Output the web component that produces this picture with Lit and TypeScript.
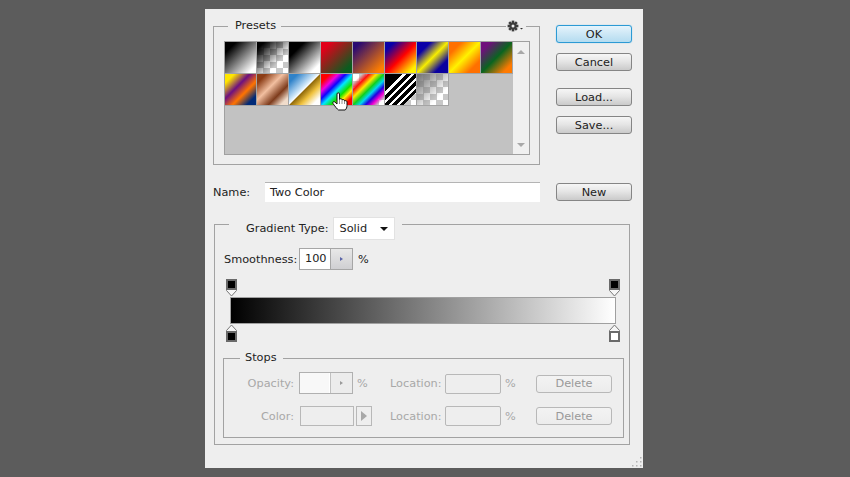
import { css, html, LitElement, svg } from "lit";
import { customElement } from "lit/decorators.js";

const CHECK = "conic-gradient(#c8c8c8 25%, #fff 0 50%, #c8c8c8 0 75%, #fff 0) 0 0 / 13px 13px";

const SWATCHES = [
  "linear-gradient(135deg, #000 18%, #fff 88%)",
  `linear-gradient(135deg, #000 12%, rgba(0,0,0,0) 68%), ${CHECK}`,
  "linear-gradient(135deg, #000 25%, #fff 85%)",
  "linear-gradient(135deg, #e2001a 15%, #0b5c1f 85%)",
  "linear-gradient(135deg, #2a0a72 12%, #ff7e00 88%)",
  "linear-gradient(135deg, #0a00a8 15%, #ff0000 52%, #fff200 88%)",
  "linear-gradient(135deg, #0a00a8 22%, #f7ee00 50%, #0a00a0 78%)",
  "linear-gradient(135deg, #ff7000 20%, #fff200 50%, #ff7000 80%)",
  "linear-gradient(135deg, #6f0f7c 15%, #0a6420 50%, #ff7a00 85%)",
  "linear-gradient(135deg, #ffe600 15%, #6d1080 40%, #ff7400 62%, #002a78 85%)",
  "linear-gradient(135deg, #8c3d16 15%, #f2bfa0 42%, #7d3b1c 68%, #f0dccb 88%)",
  "linear-gradient(135deg, #2f82c9 14%, #d2e9fb 44%, #fff 49.5%, #8c6508 50.5%, #f0c23e 68%, #fff 88%)",
  "linear-gradient(135deg, #ff0000 14%, #f000e0 28%, #1000ff 40%, #00e8ff 52%, #10e000 66%, #fff200 76%, #ff0000 88%)",
  `linear-gradient(135deg, transparent 14%, #ff1010 26%, #ffe800 38%, #10d020 50%, #00d8f0 60%, #2000e0 70%, #f000d0 80%, transparent 90%), ${CHECK}`,
  `linear-gradient(135deg, #000 0 29%, #fff 29% 35%, #000 35% 42%, #fff 42% 48%, #000 48% 55%, #fff 55% 61%, #000 61% 68%, #fff 68% 74%, #000 74% 80%, transparent 80%), ${CHECK}`,
  `linear-gradient(135deg, #777 5%, rgba(120,120,120,0) 72%), ${CHECK}`,
];

const stop = (fill: string, flip: boolean) => svg`
  <svg class="stop" width="11" height="18" viewBox="0 0 11 18">
    <g transform=${flip ? "translate(0 18) scale(1 -1)" : ""}>
      <path d="M.5 9.500v2l5 5.500 5-5.500v-2z" fill="#f6f6f6" stroke="#777" />
      <rect x="1" y="1" width="9" height="9" fill=${fill} stroke="#6a6a6a" stroke-width="2" />
    </g>
  </svg>
`;

@customElement("app-root")
export class AppRoot extends LitElement {
  private swatches() {
    return SWATCHES.map((bg) => html`<div class="swatch" style="background:${bg}"></div>`);
  }

  render() {
    return html`
      <div class="dialog">
        <div class="top">
          <div class="group presets">
            <div class="legend-row">
              <span class="legend">Presets</span>
              <span class="gear">
                <svg width="18" height="12" viewBox="0 0 18 12">
                  <g fill="#3c3c3c">
                    <circle cx="6" cy="6" r="3.6" />
                    <rect x="4.7" y="0.6" width="2.6" height="10.8" />
                    <rect x="0.6" y="4.7" width="10.8" height="2.6" />
                    <rect x="4.7" y="0.6" width="2.6" height="10.8" transform="rotate(45 6 6)" />
                    <rect x="4.7" y="0.6" width="2.6" height="10.8" transform="rotate(-45 6 6)" />
                  </g>
                  <circle cx="6" cy="6" r="1.5" fill="#eee" />
                  <path d="M13 8h3l-1.500 1.500z" fill="#333" />
                </svg>
              </span>
            </div>
            <div class="picker">
              <div class="swatches">${this.swatches()}</div>
              <div class="scrollbar">
                <span class="tri up"></span>
                <span class="tri down"></span>
              </div>
              <svg class="hand" width="17" height="19" viewBox="0 0 17 19">
                <path
                  d="M5 2c0-1.600 2.500-1.600 2.500 0v5.500c.4-1 2.300-1 2.500 0v.7c.5-.9 2.200-.8 2.500.2v.6c.6-.6 2.400-.5 2.500.8v3.700c0 2-.8 3.500-1.800 4.500H6.500C5 17 3.500 15 1 11.500c-.8-1.300.8-2.500 1.900-1.500L5 12z"
                  fill="#fff"
                  stroke="#111"
                  stroke-width="1"
                />
                <path d="M7.500 8v4M10 8.500v3.500M12.500 9v3" stroke="#777" stroke-width=".8" fill="none" />
              </svg>
            </div>
          </div>
          <div class="actions">
            <button class="btn default">OK</button>
            <button class="btn">Cancel</button>
            <button class="btn spaced">Load...</button>
            <button class="btn">Save...</button>
          </div>
        </div>

        <div class="name-row">
          <label class="name-label">Name:</label>
          <div class="field name-field">Two Color</div>
          <button class="btn">New</button>
        </div>

        <div class="group gradient">
          <div class="legend-row">
            <div class="legend type">
              <span>Gradient Type:</span>
              <div class="select">Solid<span class="caret"></span></div>
            </div>
          </div>

          <div class="smooth">
            <span class="smooth-label">Smoothness:</span>
            <div class="spin">
              <span class="spin-value">100</span>
              <span class="spin-btn"><i></i></span>
            </div>
            <span class="pct">%</span>
          </div>

          <div class="editor">
            <div class="stop-row">${stop("#000", false)}${stop("#000", false)}</div>
            <div class="bar"></div>
            <div class="stop-row">${stop("#000", true)}${stop("#fff", true)}</div>
          </div>

          <div class="group stops">
            <div class="legend-row"><span class="legend">Stops</span></div>
            <div class="stops-row first">
              <span class="dim lbl">Opacity:</span>
              <div class="spin off">
                <span class="spin-value"></span>
                <span class="spin-btn"><i></i></span>
              </div>
              <span class="dim unit">%</span>
              <span class="dim loc">Location:</span>
              <div class="dim-field"></div>
              <span class="dim unit2">%</span>
              <button class="btn off">Delete</button>
            </div>
            <div class="stops-row second">
              <span class="dim lbl">Color:</span>
              <div class="color-well"></div>
              <div class="color-arrow"><i></i></div>
              <span class="dim loc">Location:</span>
              <div class="dim-field"></div>
              <span class="dim unit2">%</span>
              <button class="btn off">Delete</button>
            </div>
          </div>
        </div>

        <svg class="grip" width="12" height="12" viewBox="0 0 12 12" fill="#b4b4b4">
          <rect x="9" y="1" width="1.500" height="1.500" />
          <rect x="5" y="5" width="1.500" height="1.500" />
          <rect x="9" y="5" width="1.500" height="1.500" />
          <rect x="1" y="9" width="1.500" height="1.500" />
          <rect x="5" y="9" width="1.500" height="1.500" />
          <rect x="9" y="9" width="1.500" height="1.500" />
        </svg>
      </div>
    `;
  }

  static styles = css`
    :host {
      display: block;
      height: 477px;
      background: #5c5c5c;
      overflow: hidden;
      font-family: "DejaVu Sans", sans-serif;
      font-size: 11.3px;
      color: #222;
    }

    * {
      box-sizing: border-box;
    }

    .dialog {
      position: relative;
      width: 438px;
      height: 459px;
      margin: 9px 0 0 205px;
      padding: 17px 0 0 8px;
      background: #eeeeee;
      float: left;
    }

    .top {
      display: flex;
      gap: 16px;
      align-items: flex-start;
    }

    .group {
      border: 1px solid #a2a2a2;
    }

    .legend-row {
      display: flex;
      justify-content: space-between;
      height: 14px;
      margin-top: -8px;
      line-height: 14px;
    }

    .legend {
      background: #eeeeee;
      margin-left: 14px;
      padding: 0 7px;
    }

    .presets {
      width: 327px;
      height: 139px;
      padding: 0 9px 0 10px;
    }

    .presets .legend {
      margin-left: 4px;
      padding: 0 5px 0 7px;
    }

    .gear {
      display: flex;
      align-items: center;
      height: 14px;
      width: 20px;
      padding-left: 1px;
      margin-right: 4px;
      background: #eeeeee;
    }

    .picker {
      position: relative;
      display: flex;
      width: 306px;
      height: 114px;
      margin-top: 8px;
      border: 1px solid #a0a0a0;
      background: #c2c2c2;
    }

    .swatches {
      display: grid;
      grid-template-columns: repeat(9, 32px);
      grid-auto-rows: 32px;
      width: 288px;
    }

    .swatch {
      border-right: 1px solid #a4a4a4;
      border-bottom: 1px solid #a4a4a4;
      background-clip: padding-box;
    }

    .scrollbar {
      display: flex;
      flex-direction: column;
      justify-content: space-between;
      align-items: center;
      width: 16px;
      padding: 8px 0 7px;
      background: #f0f0f0;
    }

    .tri {
      width: 0;
      height: 0;
      border-left: 4px solid transparent;
      border-right: 4px solid transparent;
    }

    .tri.up {
      border-bottom: 4px solid #a8a8a8;
    }

    .tri.down {
      border-top: 4px solid #a8a8a8;
    }

    .hand {
      position: absolute;
      left: 107px;
      top: 50px;
    }

    .actions {
      display: flex;
      flex-direction: column;
      gap: 10px;
      margin-top: -1px;
    }

    .btn {
      width: 76px;
      height: 18px;
      padding: 0;
      border: 1px solid #858585;
      border-radius: 3px;
      background: linear-gradient(#f6f6f6, #e6e6e6 45%, #cacaca);
      font: inherit;
      line-height: 15px;
      color: #222;
      text-align: center;
    }

    .btn.default {
      border-color: #2c9ad4;
      background: linear-gradient(#e6f4fc, #cfe8f6 45%, #b4dcf0);
      box-shadow: 0 0 1px #5ab4e4;
    }

    .btn.spaced {
      margin-top: 7px;
    }

    .btn.off {
      border-color: #b8b8b8;
      background: linear-gradient(#f3f3f3, #ececec);
      color: #999;
    }

    .name-row {
      display: flex;
      align-items: center;
      height: 20px;
      margin-top: 17px;
    }

    .name-label {
      width: 52px;
    }

    .field {
      background: #fff;
      border-top: 1px solid #b4b4b4;
    }

    .name-field {
      width: 275px;
      height: 20px;
      margin-right: 16px;
      padding-left: 5px;
      line-height: 19px;
    }

    .gradient {
      position: relative;
      width: 416px;
      height: 221px;
      margin: 22px 0 0 1px;
      padding: 0 6px 0 9px;
    }

    .gradient > .legend-row {
      height: 23px;
      margin-top: -8px;
      margin-left: -9px;
    }

    .type {
      display: flex;
      align-items: center;
      gap: 4px;
      padding: 0 7px 0 17px;
    }

    .select {
      display: flex;
      align-items: center;
      justify-content: space-between;
      width: 62px;
      height: 23px;
      padding: 0 6px;
      background: #fff;
      border: 1px solid #e2e2e2;
    }

    .caret {
      width: 0;
      height: 0;
      border-left: 4px solid transparent;
      border-right: 4px solid transparent;
      border-top: 4px solid #111;
    }

    .smooth {
      display: flex;
      align-items: center;
      height: 22px;
      margin-top: 8px;
    }

    .smooth-label {
      width: 75px;
    }

    .spin {
      display: flex;
      width: 54px;
      height: 22px;
      border: 1px solid #a6a6a6;
      background: #fff;
    }

    .spin-value {
      width: 30px;
      padding-left: 5px;
      line-height: 20px;
    }

    .spin-btn {
      display: flex;
      align-items: center;
      justify-content: center;
      width: 22px;
      border-left: 1px solid #a6a6a6;
      background: linear-gradient(#e8e8e8, #cfcfd2);
    }

    .spin-btn i {
      border-left: 3px solid #5a64a8;
      border-top: 2.500px solid transparent;
      border-bottom: 2.500px solid transparent;
    }

    .pct {
      margin-left: 5px;
    }

    .editor {
      width: 394px;
      margin: 9px 0 0 2px;
    }

    .stop-row {
      display: flex;
      justify-content: space-between;
      height: 18px;
    }

    .stop {
      display: block;
    }

    .bar {
      height: 27px;
      margin: 0 4px;
      border: 1px solid #a0a0a0;
      background: linear-gradient(90deg, #000, #fff);
    }

    .stops {
      width: 401px;
      height: 80px;
      margin: 16px 0 0 -1px;
    }

    .stops .legend {
      margin-left: 16px;
      padding: 0 6px 0 5px;
    }

    .stops-row {
      display: flex;
      align-items: center;
    }

    .first {
      height: 22px;
      margin-top: 7px;
    }

    .first .dim-field,
    .first .btn {
      margin-top: 1px;
    }

    .second {
      height: 20px;
      margin-top: 12px;
    }

    .dim {
      color: #a8a8a8;
    }

    .lbl {
      width: 70px;
      text-align: right;
      margin-right: 5px;
    }

    .spin.off {
      background: linear-gradient(90deg, #f8f8f8 0 31px, #eeeeee 31px);
      border-color: #b0b0b0;
    }

    .spin.off .spin-value {
      width: 30px;
      border-right: 1px solid #fff;
    }

    .spin.off .spin-btn {
      background: #ececec;
      border-left-color: #c0c0c0;
    }

    .spin.off .spin-btn i {
      border-left-color: #9a9a9a;
    }

    .unit {
      width: 37px;
      padding-left: 4px;
    }

    .loc {
      width: 55px;
    }

    .dim-field {
      width: 56px;
      height: 20px;
      border: 1px solid #b8b8b8;
      border-radius: 2px;
    }

    .unit2 {
      width: 35px;
      padding-left: 4px;
    }

    .color-well {
      width: 54px;
      height: 20px;
      margin-left: 1px;
      border: 1px solid #b8b8b8;
    }

    .color-arrow {
      display: flex;
      align-items: center;
      justify-content: center;
      width: 16px;
      height: 20px;
      margin: 0 18px 0 2px;
      border: 1px solid #b8b8b8;
    }

    .color-arrow i {
      border-left: 6px solid #a8a8a8;
      border-top: 5px solid transparent;
      border-bottom: 5px solid transparent;
    }

    .grip {
      position: absolute;
      right: 0;
      bottom: 0;
    }
  `;
}
